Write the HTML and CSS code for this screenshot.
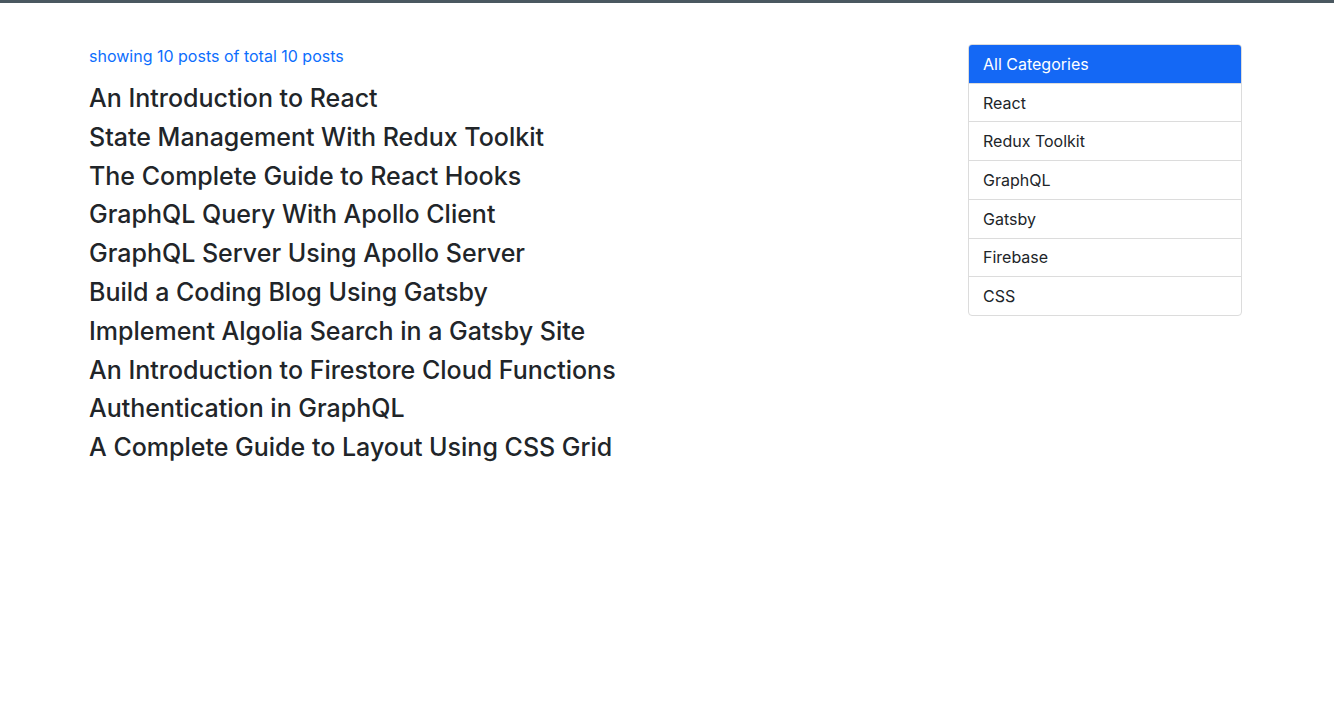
FILE: index.html
```html
<!DOCTYPE html>
<html lang="en">
<head>
<meta charset="utf-8">
<title>Posts</title>
<link rel="stylesheet" href="styles.css">
</head>
<body>
<div class="topbar"></div>
<div class="page">
  <main class="posts">
    <p class="count">showing 10 posts of total 10 posts</p>
    <h4 class="title">An Introduction to React</h4>
    <h4 class="title">State Management With Redux Toolkit</h4>
    <h4 class="title">The Complete Guide to React Hooks</h4>
    <h4 class="title">GraphQL Query With Apollo Client</h4>
    <h4 class="title">GraphQL Server Using Apollo Server</h4>
    <h4 class="title">Build a Coding Blog Using Gatsby</h4>
    <h4 class="title">Implement Algolia Search in a Gatsby Site</h4>
    <h4 class="title">An Introduction to Firestore Cloud Functions</h4>
    <h4 class="title">Authentication in GraphQL</h4>
    <h4 class="title">A Complete Guide to Layout Using CSS Grid</h4>
  </main>
  <aside class="sidebar">
    <ul class="list-group">
      <li class="list-item active">All Categories</li>
      <li class="list-item">React</li>
      <li class="list-item">Redux Toolkit</li>
      <li class="list-item">GraphQL</li>
      <li class="list-item">Gatsby</li>
      <li class="list-item">Firebase</li>
      <li class="list-item">CSS</li>
    </ul>
  </aside>
</div>
</body>
</html>
```
FILE: styles.css
```css
* { box-sizing: border-box; }
html, body { margin: 0; padding: 0; background: #fff; }
body {
  font-family: Inter, "Noto Sans", "Liberation Sans", sans-serif;
  color: #212529;
}
.topbar { height: 3px; background: #4a5860; }
.page {
  display: flex;
  justify-content: space-between;
  padding: 41px 92px 0 89px;
}
.count {
  margin: 0 0 16px;
  font-size: 16px;
  line-height: 24px;
  color: #0d6efd;
}
.title {
  margin: 0 0 10px;
  font-size: 25px;
  font-weight: 500;
  line-height: 28.8px;
}
.sidebar { width: 274px; }
.list-group {
  list-style: none;
  margin: 0;
  padding: 0;
  border: 1px solid #dcdcdc;
  border-radius: 4px;
  overflow: hidden;
}
.list-item {
  font-size: 16px;
  line-height: 24px;
  padding: 6.85px 14px;
  border-top: 1px solid #dcdcdc;
}
.list-item:first-child { border-top: 0; }
.list-item.active {
  background: #1468f5;
  color: #fff;
  padding-top: 7px;
  padding-bottom: 6.8px;
}
```
